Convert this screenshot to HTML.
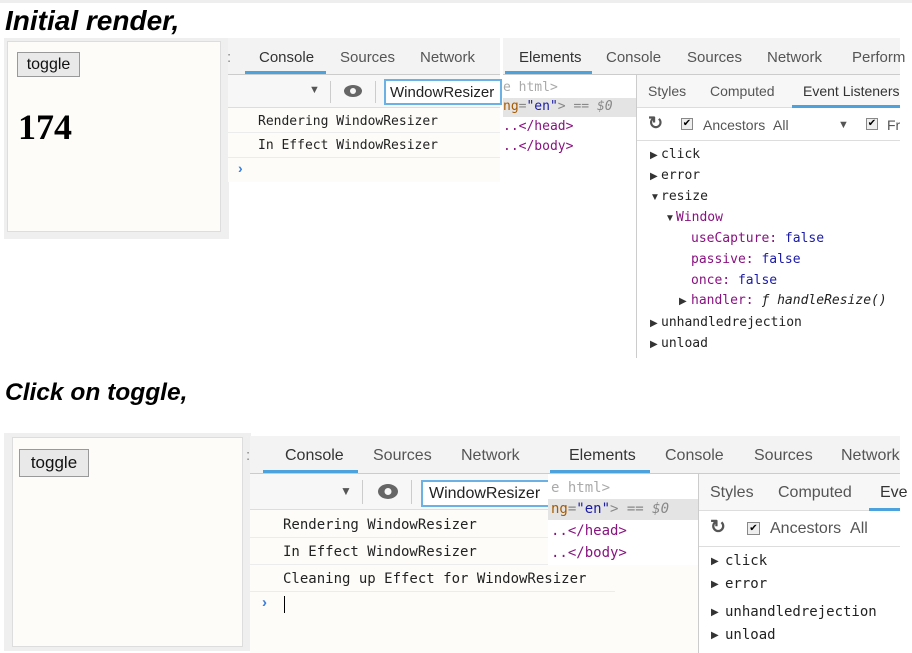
<!DOCTYPE html>
<html><head><style>
body{margin:0;width:912px;height:653px;background:#fff;position:relative;overflow:hidden;font-family:"Liberation Sans",sans-serif;}
div,span{position:absolute;box-sizing:border-box;white-space:nowrap;}
.t{font-size:15px;color:#333;}
.m{font-family:"DejaVu Sans Mono","Liberation Mono",monospace;font-size:13px;color:#222;}
.bar{background:#f3f3f3;border-bottom:1px solid #ccc;}
.ul{height:3px;background:#4ca2dc;}
.bg{background:#fdfcf8;}
.btn{background:#e9e9e9;border:1px solid #999;font-size:16px;color:#111;text-align:center;}
.row{border-bottom:1px solid #ececec;}
.tri{font-size:10px;color:#333;}
</style></head><body>
<div style="left:0;top:0;width:912px;height:3px;background:#eee"></div>
<div style="left:5px;top:5px;font-size:28px;font-weight:bold;font-style:italic;color:#000">Initial render,</div>

<div style="left:4px;top:38px;width:225px;height:201px;background:#efefef"></div>
<div class="bg" style="left:7px;top:41px;width:214px;height:191px;border:1px solid #ddd"></div>
<div class="btn" style="left:17px;top:52px;width:63px;height:25px;line-height:23px">toggle</div>
<div style="left:18px;top:106px;font-family:'Liberation Serif',serif;font-weight:bold;font-size:36px;color:#000">174</div>

<div class="bg" style="left:228px;top:38px;width:272px;height:144px"></div>
<div class="bar" style="left:228px;top:38px;width:272px;height:37px"></div>
<span class="t" style="left:227px;top:49px;color:#888">:</span>
<span class="t" style="left:259px;top:49px">Console</span>
<span class="t" style="left:340px;top:49px;color:#555">Sources</span>
<span class="t" style="left:420px;top:49px;color:#555">Network</span>
<div class="ul" style="left:245px;top:71px;width:81px"></div>
<div style="left:228px;top:75px;width:272px;height:33px;border-bottom:1px solid #ddd;background:#f7f7f7"></div>
<span style="left:309px;top:84px;font-size:11px;color:#555">▼</span>
<div style="left:330px;top:81px;width:1px;height:22px;background:#ccc"></div>
<svg style="position:absolute;left:343px;top:84px" width="20" height="14"><ellipse cx="10" cy="7" rx="9" ry="6" fill="#666"/><circle cx="10" cy="7" r="3" fill="#f7f7f7"/></svg>
<div style="left:375px;top:81px;width:1px;height:22px;background:#ccc"></div>
<div style="left:384px;top:79px;width:118px;height:26px;border:2px solid #6bb1e4;background:#fff"></div>
<span class="t" style="left:390px;top:84px;color:#222">WindowResizer</span>
<div class="row" style="left:228px;top:108px;width:272px;height:25px"></div>
<span class="m" style="left:258px;top:114px">Rendering WindowResizer</span>
<div class="row" style="left:228px;top:133px;width:272px;height:25px"></div>
<span class="m" style="left:258px;top:138px">In Effect WindowResizer</span>
<span style="left:238px;top:160px;color:#3b7fd9;font-weight:bold;font-size:14px">›</span>

<div style="left:503px;top:38px;width:397px;height:320px;background:#fff"></div>
<div class="bar" style="left:503px;top:38px;width:397px;height:37px"></div>
<span class="t" style="left:519px;top:49px">Elements</span>
<span class="t" style="left:606px;top:49px;color:#555">Console</span>
<span class="t" style="left:687px;top:49px;color:#555">Sources</span>
<span class="t" style="left:767px;top:49px;color:#555">Network</span>
<span class="t" style="left:852px;top:49px;color:#555">Perform</span>
<div class="ul" style="left:505px;top:71px;width:87px"></div>
<div class="m" style="left:503px;top:80px;color:#aaa">e html&gt;</div>
<div style="left:503px;top:98px;width:133px;height:19px;background:#e4e4e4"></div>
<div class="m" style="left:503px;top:99px"><span style="position:static;color:#a65a00">ng</span><span style="position:static;color:#888">=</span><span style="position:static;color:#1a1aa6">"en"</span><span style="position:static;color:#888">&gt; == <i>$0</i></span></div>
<div class="m" style="left:503px;top:119px;color:#881280">..&lt;/head&gt;</div>
<div class="m" style="left:503px;top:139px;color:#881280">..&lt;/body&gt;</div>
<div style="left:636px;top:75px;width:1px;height:283px;background:#ccc"></div>
<div style="left:637px;top:75px;width:263px;height:33px;border-bottom:1px solid #ddd;background:#f7f7f7"></div>
<span class="t" style="left:648px;top:83px;color:#555;font-size:14px">Styles</span>
<span class="t" style="left:710px;top:83px;color:#555;font-size:14px">Computed</span>
<span class="t" style="left:803px;top:83px;font-size:14px">Event Listeners</span>
<div class="ul" style="left:792px;top:105px;width:108px"></div>
<div style="left:637px;top:108px;width:263px;height:33px;border-bottom:1px solid #ddd"></div>
<span style="left:648px;top:113px;font-size:18px;font-weight:bold;color:#555">↻</span>
<div style="left:681px;top:118px;width:12px;height:12px;border:1px solid #888;background:#eee;font-size:10px;line-height:10px;text-align:center">✔</div>
<span class="t" style="left:703px;top:117px;color:#555;font-size:14px">Ancestors&nbsp;&nbsp;All</span>
<span style="left:838px;top:119px;font-size:11px;color:#555">▼</span>
<div style="left:866px;top:118px;width:12px;height:12px;border:1px solid #888;background:#eee;font-size:10px;line-height:10px;text-align:center">✔</div>
<span class="t" style="left:887px;top:117px;color:#555;font-size:14px">Fr</span>
<span class="tri" style="left:650px;top:150px">▶</span><span class="m" style="left:661px;top:147px">click</span>
<span class="tri" style="left:650px;top:171px">▶</span><span class="m" style="left:661px;top:168px">error</span>
<span class="tri" style="left:650px;top:192px">▼</span><span class="m" style="left:661px;top:189px">resize</span>
<span class="tri" style="left:665px;top:213px">▼</span><span class="m" style="left:676px;top:210px;color:#881280">Window</span>
<span class="m" style="left:691px;top:231px;color:#881280">useCapture: <span style="position:static;color:#1a1aa6">false</span></span>
<span class="m" style="left:691px;top:252px;color:#881280">passive: <span style="position:static;color:#1a1aa6">false</span></span>
<span class="m" style="left:691px;top:273px;color:#881280">once: <span style="position:static;color:#1a1aa6">false</span></span>
<span class="tri" style="left:679px;top:296px">▶</span><span class="m" style="left:691px;top:293px;color:#881280">handler: <i style="color:#222">ƒ handleResize()</i></span>
<span class="tri" style="left:650px;top:318px">▶</span><span class="m" style="left:661px;top:315px">unhandledrejection</span>
<span class="tri" style="left:650px;top:339px">▶</span><span class="m" style="left:661px;top:336px">unload</span>

<div style="left:5px;top:379px;font-size:24.5px;font-weight:bold;font-style:italic;color:#000">Click on toggle,</div>

<div style="left:4px;top:433px;width:247px;height:218px;background:#efefef"></div>
<div class="bg" style="left:12px;top:437px;width:231px;height:210px;border:1px solid #ddd"></div>
<div class="btn" style="left:19px;top:449px;width:70px;height:28px;line-height:26px;font-size:17px">toggle</div>

<div class="bg" style="left:250px;top:436px;width:365px;height:217px"></div>
<div class="bar" style="left:250px;top:436px;width:298px;height:38px"></div>
<span class="t" style="left:246px;top:447px;color:#888">:</span>
<span class="t" style="left:285px;top:447px;font-size:16px">Console</span>
<span class="t" style="left:373px;top:447px;color:#555;font-size:16px">Sources</span>
<span class="t" style="left:461px;top:447px;color:#555;font-size:16px">Network</span>
<div class="ul" style="left:263px;top:470px;width:95px"></div>
<div style="left:250px;top:474px;width:298px;height:36px;border-bottom:1px solid #ddd;background:#f7f7f7"></div>
<span style="left:340px;top:484px;font-size:12px;color:#555">▼</span>
<div style="left:362px;top:480px;width:1px;height:24px;background:#ccc"></div>
<svg style="position:absolute;left:377px;top:483px" width="22" height="17"><ellipse cx="11" cy="8.5" rx="10" ry="7.5" fill="#666"/><circle cx="11" cy="8.5" r="3.5" fill="#f7f7f7"/></svg>
<div style="left:411px;top:480px;width:1px;height:24px;background:#ccc"></div>
<div style="left:421px;top:480px;width:130px;height:27px;border:2px solid #6bb1e4;background:#fff"></div>
<span class="t" style="left:429px;top:485px;color:#222;font-size:16px">WindowResizer</span>
<div class="row" style="left:250px;top:511px;width:298px;height:27px"></div>
<span class="m" style="left:283px;top:517px;font-size:14px">Rendering WindowResizer</span>
<div class="row" style="left:250px;top:538px;width:298px;height:27px"></div>
<span class="m" style="left:283px;top:544px;font-size:14px">In Effect WindowResizer</span>

<div style="left:548px;top:436px;width:352px;height:217px;background:#fff"></div>
<div class="bar" style="left:548px;top:436px;width:352px;height:38px"></div>
<span class="t" style="left:569px;top:447px;font-size:16px">Elements</span>
<span class="t" style="left:665px;top:447px;color:#555;font-size:16px">Console</span>
<span class="t" style="left:754px;top:447px;color:#555;font-size:16px">Sources</span>
<span class="t" style="left:841px;top:447px;color:#555;font-size:16px">Network</span>
<div class="ul" style="left:550px;top:470px;width:100px"></div>
<div class="m" style="left:551px;top:480px;color:#aaa;font-size:14px">e html&gt;</div>
<div style="left:548px;top:499px;width:150px;height:21px;background:#e4e4e4"></div>
<div class="m" style="left:551px;top:501px;font-size:14px"><span style="position:static;color:#a65a00">ng</span><span style="position:static;color:#888">=</span><span style="position:static;color:#1a1aa6">"en"</span><span style="position:static;color:#888">&gt; == <i>$0</i></span></div>
<div class="m" style="left:551px;top:523px;color:#881280;font-size:14px">..&lt;/head&gt;</div>
<div class="m" style="left:551px;top:545px;color:#881280;font-size:14px">..&lt;/body&gt;</div>
<div style="left:698px;top:474px;width:1px;height:179px;background:#ccc"></div>
<div style="left:699px;top:474px;width:201px;height:37px;border-bottom:1px solid #ddd;background:#f7f7f7"></div>
<span class="t" style="left:710px;top:484px;color:#555;font-size:16px">Styles</span>
<span class="t" style="left:778px;top:484px;color:#555;font-size:16px">Computed</span>
<span class="t" style="left:880px;top:484px;font-size:16px">Eve</span>
<div class="ul" style="left:869px;top:508px;width:31px"></div>
<div style="left:699px;top:511px;width:201px;height:36px;border-bottom:1px solid #ddd"></div>
<span style="left:710px;top:516px;font-size:19px;font-weight:bold;color:#555">↻</span>
<div style="left:747px;top:522px;width:13px;height:13px;border:1px solid #888;background:#eee;font-size:10px;line-height:11px;text-align:center">✔</div>
<span class="t" style="left:770px;top:520px;color:#555;font-size:16px">Ancestors&nbsp;&nbsp;All</span>
<span class="tri" style="left:711px;top:556px">▶</span><span class="m" style="left:725px;top:553px;font-size:14px">click</span>
<span class="tri" style="left:711px;top:579px">▶</span><span class="m" style="left:725px;top:576px;font-size:14px">error</span>
<span class="tri" style="left:711px;top:607px">▶</span><span class="m" style="left:725px;top:604px;font-size:14px">unhandledrejection</span>
<span class="tri" style="left:711px;top:630px">▶</span><span class="m" style="left:725px;top:627px;font-size:14px">unload</span>

<div class="bg" style="left:250px;top:565px;width:448px;height:88px"></div>
<div class="row" style="left:250px;top:565px;width:365px;height:27px"></div>
<span class="m" style="left:283px;top:571px;font-size:14px">Cleaning up Effect for WindowResizer</span>
<span style="left:262px;top:594px;color:#3b7fd9;font-weight:bold;font-size:15px">›</span>
<div style="left:284px;top:596px;width:1px;height:17px;background:#000"></div>
</body></html>
